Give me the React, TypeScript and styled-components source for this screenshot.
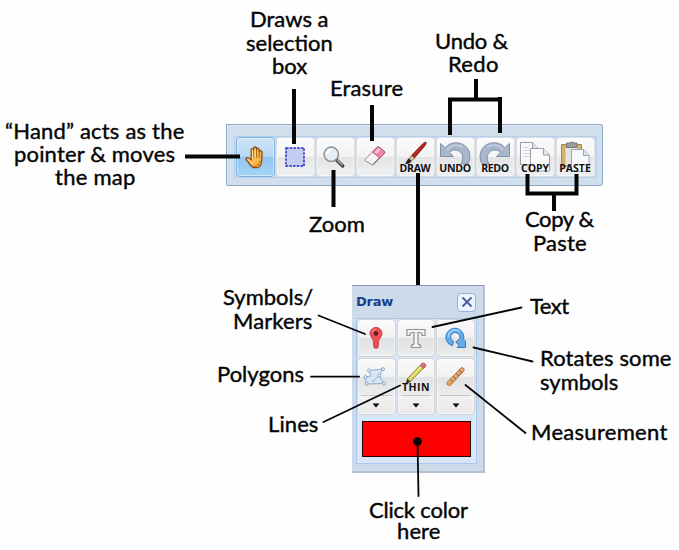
import React from "react";
import styled, { createGlobalStyle, css } from "styled-components";

const GlobalStyle = createGlobalStyle`
  body { margin: 0; background: #fff; }
  * { box-sizing: border-box; }
`;

const Figure = styled.main`
  position: relative;
  width: 679px;
  height: 550px;
  overflow: hidden;
  background: #fefefe;
  display: flex;
  flex-direction: column;
  align-items: flex-start;
`;

const Toolbar = styled.div`
  margin: 124px 0 0 226px;
  width: 377px;
  height: 62px;
  padding: 11px 6px 7px 7px;
  border: 1px solid #8aa7c6;
  border-radius: 0 2px 3px 2px;
  background: #d1deeb;
  box-shadow: inset 1px 1px 0 #dfe9f3;
`;

const ToolRow = styled.div`
  display: flex;
  width: 363px;
  height: 42px;
  padding: 0 1px 0 0;
  border: 1px solid #b3cfee;
  background: #ccdcef;
`;

const ToolButton = styled.button<{ $active?: boolean }>`
  position: relative;
  flex: 1 1 0;
  height: 40px;
  margin: 0 0.5px;
  padding: 0;
  display: flex;
  align-items: center;
  justify-content: center;
  border: 1px solid ${(p) => (p.$active ? "#7fb2dc" : "#dcdde0")};
  border-radius: 4px;
  background: ${(p) =>
    p.$active
      ? "linear-gradient(#cfe5f8 0, #b5d8f5 48%, #90c5ef 52%, #a4d4f7 100%)"
      : "linear-gradient(#fbfbfb 0, #f3f3f4 49%, #e3e4e6 51%, #eff0f1 100%)"};
  box-shadow: inset 0 0 0 1px rgba(255, 255, 255, 0.45);
`;

const ButtonCaption = styled.span<{ $spacing?: number; $top?: number }>`
  position: absolute;
  left: -4px;
  right: -4px;
  top: ${(p) => p.$top ?? 23}px;
  text-align: center;
  font: bold 10.5px/14px "Open Sans", "Noto Sans", sans-serif;
  letter-spacing: ${(p) => p.$spacing ?? 0}px;
  color: #111;
  white-space: nowrap;
`;

const Palette = styled.section`
  margin: 99px 0 0 352px;
  width: 133px;
  height: 188px;
  padding: 0 8px 0 4px;
  border-top: 1px solid #8796a9;
  border-right: 2px solid #b4c1d0;
  border-bottom: 2px solid #b3c1d2;
  background: #ccdaea;
`;

const PaletteHeader = styled.header`
  display: flex;
  align-items: center;
  justify-content: space-between;
  height: 32px;
`;

const PaletteTitle = styled.h2`
  margin: 0;
  font: bold 13px/16px "DejaVu Sans", "Open Sans", sans-serif;
  letter-spacing: -0.2px;
  color: #173f8c;
`;

const CloseButton = styled.button`
  width: 19px;
  height: 19px;
  margin-right: -1px;
  padding: 0;
  display: grid;
  place-items: center;
  border: 1px solid #8fb3e6;
  border-radius: 4px;
  background: #edf3fc;
`;

const PaletteBody = styled.div`
  width: 121px;
  height: 146px;
  border: 1px solid #a9c8ef;
  background: #d9e6f6;
`;

const PaletteGrid = styled.div`
  display: grid;
  grid-template-columns: repeat(3, 38.7px);
  grid-template-rows: 38px 57px;
  gap: 1px;
`;

const buttonFace = css`
  border: 1px solid #d3d4d6;
  border-radius: 4px;
  background: linear-gradient(#fafafa 0, #f1f1f2 48%, #e0e1e2 51%, #ececed 100%);
  box-shadow: inset 0 0 0 1px rgba(255, 255, 255, 0.45);
`;

const PaletteButton = styled.button`
  ${buttonFace}
  position: relative;
  padding: 0;
  display: flex;
  align-items: center;
  justify-content: center;
`;

const SplitButton = styled.div`
  ${buttonFace}
  background: linear-gradient(#fafafa 0, #f1f1f2 32%, #e1e2e3 34%, #ececed 64%, #f1f1f1 66%, #ebebeb 100%);
  position: relative;
  display: flex;
  flex-direction: column;
  padding: 0 3px;
`;

const SplitFace = styled.div`
  height: 37px;
  display: flex;
  align-items: center;
  justify-content: center;
  border-bottom: 1px solid #c6c6c8;
`;

const SplitArrow = styled.div`
  flex: 1;
  display: flex;
  align-items: center;
  justify-content: center;
`;

const ColorSwatch = styled.div`
  width: 109px;
  height: 36px;
  margin: 6px 0 0 5px;
  border: 1px solid #280000;
  background: #fe0000;
`;

const Leaders = styled.svg`
  position: absolute;
  inset: 0;
  pointer-events: none;
`;

const Callout = styled.span<{ $x: number; $base: number; $spacing: number }>`
  position: absolute;
  left: ${(p) => p.$x}px;
  top: ${(p) => p.$base - 19}px;
  font: 22px/22px Lato, "Open Sans", sans-serif;
  letter-spacing: ${(p) => p.$spacing}px;
  color: #050505;
  -webkit-text-stroke: 0.4px #050505;
  white-space: pre;
`;

const HandIcon = () => (
  <svg width="23" height="25" viewBox="0 0 20 22">
    <path
      d="M6.2 12V4.400c0-1.700 2-1.700 2.200 0V3c.1-1.800 2.300-1.800 2.500 0v1c.3-1.700 2.400-1.400 2.400.3v1.600c.6-1.400 2.600-1 2.500.6L15.500 13c-.1 3.500-1.500 6.600-4.200 7H8.400c-2.200-.5-3.500-3.300-5.100-5.400-.8-1-2-1.900-1.600-2.800.7-1.300 2.500-.7 4.500 1.500z"
      fill="#f9b750" stroke="#8a4a0c" strokeWidth="1.100" strokeLinejoin="round"
    />
    <path d="M8.400 4.500V11M10.900 4V11M13.300 5.500v6" stroke="#a55f14" strokeWidth=".8" />
    <path d="M7.300 4v8M9.700 3.500v7M3.500 12.500l4 4" stroke="#ffe1a0" strokeWidth=".9" />
    <path d="M8 18.700c4 .2 5.500-2 6.200-5" stroke="#df7f1e" strokeWidth="1.400" fill="none" />
  </svg>
);

const SelectIcon = () => (
  <svg width="20" height="20" viewBox="0 0 20 20">
    <rect x="1" y="1" width="18" height="18" fill="#c4cdf2" stroke="#2a2ac0" strokeWidth="1.500" strokeDasharray="2.600 1.100" />
  </svg>
);

const ZoomIcon = () => (
  <svg width="24" height="24" viewBox="0 0 22 22">
    <path d="M12.800 13.200l6.200 6" stroke="#444" strokeWidth="3.200" strokeLinecap="round" />
    <path d="M14 14l4.700 4.500" stroke="#b9b9b9" strokeWidth="1.100" />
    <circle cx="8.500" cy="8.500" r="6.600" fill="#e5edf5" stroke="#8d9095" strokeWidth="1.400" />
    <path d="M4.500 8.500a4 4 0 0 1 4-4" stroke="#fff" strokeWidth="1.800" fill="none" />
  </svg>
);

const EraserIcon = () => (
  <svg width="24" height="22" viewBox="0 0 24 22">
    <path d="M2.300 14.300L14 2.200q1-.8 2 0l5.300 4q.9.900.1 1.900L11 19.500q-1 1-2 .2L2.600 16q-1-.8-.3-1.700z" fill="#f5f3f4" stroke="#99878d" />
    <path d="M9.300 7.100L14 2.200q1-.8 2 0l5.300 4q.9.900.1 1.900L17 13z" fill="#ee86a5" stroke="#c25378" />
    <path d="M11.500 7.300l4-4 2 1.500-3.800 4.200z" fill="#fac6d3" />
    <path d="M9.500 19.500l7-7" stroke="#8e7479" />
  </svg>
);

const BrushIcon = () => (
  <svg width="30" height="26" viewBox="0 0 30 26">
    <path d="M26.800 1.300c1 .7.200 2-.7 3.200L15.500 17l-3-2.500L23.500 3c1.200-1.200 2.500-2.200 3.300-1.700z" fill="#b52520" stroke="#701814" strokeWidth=".8" />
    <path d="M12.500 14.500l3 2.500-3 3-2.600-2.300z" fill="#d9c39a" stroke="#6e593b" strokeWidth=".7" />
    <path d="M9.800 17.600l2.700 2.500c-1.600 3-4.300 3-6.500 3 1.500-1.200 1.500-4.200 3.800-5.500z" fill="#252020" />
  </svg>
);

const CurveArrow = ({ flip }: { flip?: boolean }) => (
  <svg width="34" height="24" viewBox="0 0 34 24">
    <g transform={flip ? "translate(34 0) scale(-1 1)" : undefined}>
      <path
        d="M2.500 2.500v13h13l-4-4.200c4-4.300 11.500-2.500 13 3.200.8 3-.2 6-1.500 8.500h7c4-8 1.600-16.500-5.500-19.800C18.500.4 11.500 1.500 7.300 6.700z"
        fill="#a8b6cc" stroke="#8292ab" strokeWidth="1" strokeLinejoin="round"
      />
      <path d="M9 9c4.500-5.500 11-6.300 15.500-3" stroke="#c8d1df" strokeWidth="1.200" fill="none" />
    </g>
  </svg>
);

const CopyIcon = () => (
  <svg width="34" height="32" viewBox="0 0 34 32">
    <g transform="translate(2 1)">
      <path d="M.5.500h12l6 6V22.500H.5z" fill="#f9fafc" stroke="#9a9ea5" />
      <path d="M12.500.500v6h6" fill="#e1e5eb" stroke="#9a9ea5" />
      <path d="M3 5.500h6M3 8.500h7M3 11.500h7M3 14.500h7" stroke="#d1d5dc" />
    </g>
    <g transform="translate(12 7)">
      <path d="M.5.500h13l6 6.500v16H.5z" fill="#fbfbfc" stroke="#9a9ea5" />
      <path d="M13.500.500V7h6" fill="#e7eaf0" stroke="#9a9ea5" />
    </g>
  </svg>
);

const PasteIcon = () => (
  <svg width="34" height="32" viewBox="0 0 34 32">
    <path d="M3.500 3.500h20V25h-20z" fill="#d2b266" stroke="#a98b47" />
    <path d="M7.500 6h12v18h-12z" fill="#e6e4de" />
    <path d="M8.500 2h3q2-2 4.500 0h3v4.500H8.500z" fill="#9b9c9e" stroke="#77797d" />
    <g transform="translate(13 8)">
      <path d="M.5.500h12l5.500 6v16H.5z" fill="#f8f9fc" stroke="#9ba4b5" />
      <path d="M12.500.500V6.500H18" fill="#dde4ef" stroke="#9ba4b5" />
    </g>
  </svg>
);

const PinIcon = () => (
  <svg width="16" height="24" viewBox="0 0 16 24">
    <path d="M8 1.500a6 6 0 0 1 6 6c0 3.200-3 5-3.500 8L10 21.500q-2 1.600-4 0L5.500 15.500C5 12.500 2 10.700 2 7.500a6 6 0 0 1 6-6z" fill="#ee5055" stroke="#c33b40" />
    <path d="M4 6q1-3 4-3" stroke="#f79a9a" fill="none" />
    <circle cx="8" cy="7.500" r="2.300" fill="#641a20" />
  </svg>
);

const TextToolIcon = () => (
  <svg width="22" height="22" viewBox="0 0 22 22">
    <path d="M2 2.500h18v6h-2.800q-.2-3-2.400-3H13v11q0 1.500 2.500 1.500v2.500h-9V18Q9 18 9 16.500v-11H7.200q-2.200 0-2.400 3H2z" fill="#f5f5f5" stroke="#8d8f92" strokeWidth="1.200" />
  </svg>
);

const RotateIcon = () => (
  <svg width="22" height="22" viewBox="0 0 22 22">
    <path
      d="M7.200 18.800A9 9 0 1 1 18.600 12.500L20.500 14V20.500H12L14.200 18.200L10.800 15.200L14.500 12A4.600 4.600 0 1 0 8.600 14.500z"
      fill="#66ace8" stroke="#347cc3" strokeLinejoin="round"
    />
    <path d="M3.500 10A6.800 6.800 0 0 1 14.500 4.400" stroke="#a9d7f7" strokeWidth="1.500" fill="none" />
  </svg>
);

const PolygonIcon = () => (
  <svg width="26" height="22" viewBox="0 0 26 22">
    <path d="M6 4.500L20 3l-3.500 6.500L21 17.500 3.500 18 2 11l6-1z" fill="#d7e6f5" stroke="#92aecb" />
    <path d="M16.500 9.500L9 16" stroke="#92aecb" />
    <g fill="#edf5fd" stroke="#83a3c6">
      <circle cx="6" cy="4.500" r="1.500" />
      <circle cx="20" cy="3.200" r="1.500" />
      <circle cx="16.500" cy="9.500" r="1.500" />
      <circle cx="21" cy="17.500" r="1.500" />
      <circle cx="3.500" cy="17.800" r="1.500" />
      <circle cx="2.500" cy="11" r="1.500" />
    </g>
  </svg>
);

const PencilIcon = () => (
  <svg width="24" height="24" viewBox="0 0 24 24">
    <path d="M2 22l1.500-5.200 2.800 2.700z" fill="#3c3a22" stroke="#3c3a22" strokeWidth=".8" />
    <path d="M3.500 16.800L16.500 3l3 3L6.300 19.500z" fill="#e3d85e" stroke="#77762f" strokeWidth=".9" />
    <path d="M4.800 17.200L17.300 4.500" stroke="#f8f3a2" />
    <path d="M16.300 3.200L18 1.500q1.500-1 3 .3t.4 2.900l-1.800 1.700z" fill="#dc6f83" stroke="#a74d5f" strokeWidth=".9" />
  </svg>
);

const RulerIcon = () => (
  <svg width="22" height="22" viewBox="0 0 22 22">
    <path d="M2.500 16L16 2q1.200-1 2.500.2t.2 2.800L5.500 19.300q-1.300.9-2.800-.3T2.500 16z" fill="#dfa068" stroke="#b87843" />
    <path d="M5.300 13.500l2.300 2.200M8.300 10.400l2.300 2.200M11.300 7.300l2.300 2.200M14.200 4.300l2.300 2.200" stroke="#8e562b" strokeWidth="1.100" />
    <path d="M4 16.500L17 3.200" stroke="#f3c99b" strokeWidth=".8" />
  </svg>
);

const DownArrow = () => (
  <svg width="8" height="5" viewBox="0 0 8 5">
    <path d="M.5.500h7L4 4.500z" fill="#0c0c0c" />
  </svg>
);

const IconSlot = styled.span<{ $x?: number; $y?: number }>`
  display: flex;
  margin: ${(p) => p.$y ?? 0}px 0 0 ${(p) => p.$x ?? 0}px;
`;

const callouts: [string, number, number, number][] = [
  ["“Hand” acts as the", 5, 139, 0.2],
  ["pointer & moves", 14, 162, 0.17],
  ["the map", 55, 185, 0.25],
  ["Draws a", 250, 27, 0],
  ["selection", 246, 51, 0],
  ["box", 272, 74, 0],
  ["Erasure", 330, 96, 0.15],
  ["Undo &", 435, 49, -0.2],
  ["Redo", 448, 72, 0.3],
  ["Copy &", 525, 227, -0.4],
  ["Paste", 533, 251, 0.2],
  ["Zoom", 309, 232, 0],
  ["Symbols/", 223, 305, 0],
  ["Markers", 233, 329, 0.1],
  ["Polygons", 217, 382, 0],
  ["Lines", 268, 432, 0.1],
  ["Text", 530, 314, -0.5],
  ["Rotates some", 540, 366, 0.1],
  ["symbols", 540, 390, 0],
  ["Measurement", 531, 440, 0.3],
  ["Click color", 369, 518, -0.2],
  ["here", 397, 539, 0.1],
];

export default function App() {
  return (
    <>
      <GlobalStyle />
      <Figure>
        <Toolbar>
          <ToolRow>
            <ToolButton $active aria-label="Hand"><IconSlot><HandIcon /></IconSlot></ToolButton>
            <ToolButton aria-label="Select"><IconSlot><SelectIcon /></IconSlot></ToolButton>
            <ToolButton aria-label="Zoom"><IconSlot $x={-2}><ZoomIcon /></IconSlot></ToolButton>
            <ToolButton aria-label="Erase"><IconSlot $y={-2}><EraserIcon /></IconSlot></ToolButton>
            <ToolButton><IconSlot $y={-7} $x={-3}><BrushIcon /></IconSlot><ButtonCaption $spacing={-0.3}>DRAW</ButtonCaption></ToolButton>
            <ToolButton><IconSlot $y={-8}><CurveArrow /></IconSlot><ButtonCaption $spacing={-0.3}>UNDO</ButtonCaption></ToolButton>
            <ToolButton><IconSlot $y={-8}><CurveArrow flip /></IconSlot><ButtonCaption $spacing={-0.3}>REDO</ButtonCaption></ToolButton>
            <ToolButton><IconSlot><CopyIcon /></IconSlot><ButtonCaption $spacing={-0.1}>COPY</ButtonCaption></ToolButton>
            <ToolButton><IconSlot><PasteIcon /></IconSlot><ButtonCaption $spacing={0}>PASTE</ButtonCaption></ToolButton>
          </ToolRow>
        </Toolbar>

        <Palette>
          <PaletteHeader>
            <PaletteTitle>Draw</PaletteTitle>
            <CloseButton aria-label="Close">
              <svg width="12" height="12" viewBox="0 0 12 12">
                <path d="M1.500 1.500l9 9M10.500 1.500l-9 9" stroke="#4a5f9d" strokeWidth="1.900" />
              </svg>
            </CloseButton>
          </PaletteHeader>
          <PaletteBody>
            <PaletteGrid>
              <PaletteButton aria-label="Marker"><PinIcon /></PaletteButton>
              <PaletteButton aria-label="Text"><TextToolIcon /></PaletteButton>
              <PaletteButton aria-label="Rotate"><RotateIcon /></PaletteButton>
              <SplitButton>
                <SplitFace><PolygonIcon /></SplitFace>
                <SplitArrow><DownArrow /></SplitArrow>
              </SplitButton>
              <SplitButton>
                <SplitFace>
                  <IconSlot $y={-6}><PencilIcon /></IconSlot>
                  <ButtonCaption $top={21} $spacing={0.5}>THIN</ButtonCaption>
                </SplitFace>
                <SplitArrow><DownArrow /></SplitArrow>
              </SplitButton>
              <SplitButton>
                <SplitFace><RulerIcon /></SplitFace>
                <SplitArrow><DownArrow /></SplitArrow>
              </SplitButton>
            </PaletteGrid>
            <ColorSwatch />
          </PaletteBody>
        </Palette>

        <Leaders width="679" height="550" viewBox="0 0 679 550" fill="none" stroke="#050505">
          <path
            strokeWidth="4"
            d="M185 156.500H240M294 89V144M333.500 170V207M372 105V141M418 173V285M476 79V99M450 135V99.500H500M500 97V133M527.500 174V193.500H576.500V174M554 193V211"
          />
          <path
            strokeWidth="1.800"
            strokeLinecap="round"
            d="M318.500 315.500L365 334M521.500 307.500L432.500 327M532.500 361.500L473.500 347.500M311 376.700H359M323.500 422L400 385.500M525.500 433L465.500 385M417.500 441L418.500 496"
          />
          <circle cx="417.500" cy="441.500" r="4.300" fill="#050505" stroke="none" />
        </Leaders>

        {callouts.map(([text, x, base, spacing]) => (
          <Callout key={text} $x={x} $base={base} $spacing={spacing}>{text}</Callout>
        ))}
      </Figure>
    </>
  );
}
